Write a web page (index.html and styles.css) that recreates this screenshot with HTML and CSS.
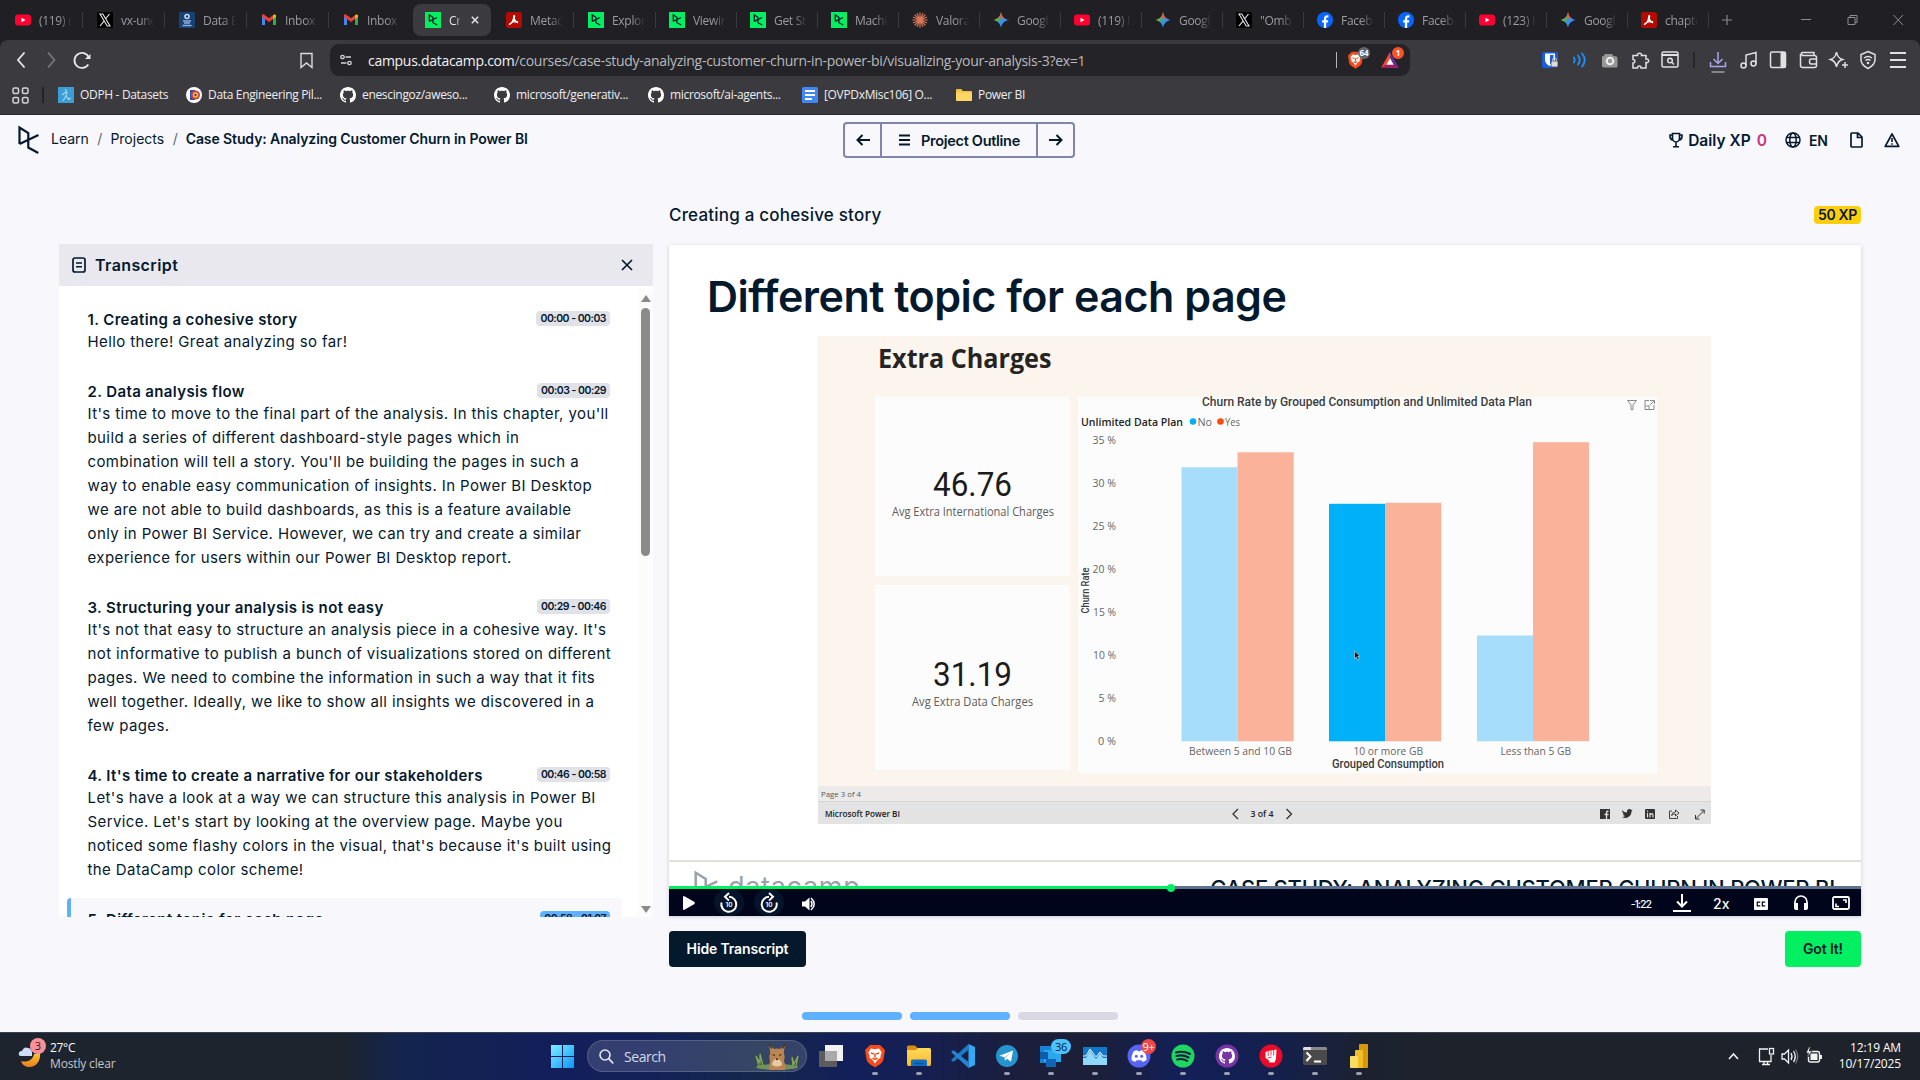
FILE: index.html
```html
<!DOCTYPE html>
<html lang="en">
<head>
<meta charset="utf-8">
<title>Case Study: Analyzing Customer Churn in Power BI</title>
<link rel="stylesheet" href="styles.css">
</head>
<body>
<svg class="defs" aria-hidden="true">
  <defs>
    <linearGradient id="gWin" x1="0" y1="0" x2="1" y2="1"><stop offset="0" stop-color="#7ff0ff"/><stop offset="1" stop-color="#0b96fb"/></linearGradient>
    <linearGradient id="gFold" x1="0" y1="0" x2="0" y2="1"><stop offset="0" stop-color="#ffd95c"/><stop offset="1" stop-color="#fbb92c"/></linearGradient>
    <linearGradient id="gGem" x1="0" y1="0" x2="1" y2="1"><stop offset=".2" stop-color="#f5b912"/><stop offset=".42" stop-color="#3fae6a"/><stop offset=".6" stop-color="#3a8bfd"/></linearGradient>
    <linearGradient id="gMoon" x1="0" y1="0" x2="0" y2="1"><stop offset="0" stop-color="#f9c63a"/><stop offset="1" stop-color="#ec7d16"/></linearGradient>
    <symbol id="yt" viewBox="0 0 16 16"><rect y="2.500" width="16" height="11" rx="3" fill="#ff0033"/><path d="M6.500 5.700v4.600L10.500 8z" fill="#fff"/></symbol>
    <symbol id="x" viewBox="0 0 16 16"><rect width="16" height="16" fill="#000"/><path d="M3 2h2.800l7.200 12h-2.800zM12.500 2L8.700 6.700M3 14l4.200-5.200" fill="none" stroke="#e8e8e8" stroke-width="1.100"/></symbol>
    <symbol id="de" viewBox="0 0 16 16"><rect width="16" height="16" fill="#174275"/><circle cx="8" cy="4.500" r="2.800" fill="#c7d7ec"/><path d="M4 9h8M5 11h6M3.500 13.500h9" stroke="#8fb0d8" stroke-width="1.300"/><circle cx="8" cy="4.500" r="1.200" fill="#174275"/></symbol>
    <symbol id="gm" viewBox="0 0 16 16"><path d="M1 13V3.500l3 2.300V13z" fill="#4285f4"/><path d="M15 13V3.500l-3 2.300V13z" fill="#34a853"/><path d="M1 3.500C1 2.200 2.500 2 3.300 2.700L8 6.300V10L1 4.800z" fill="#ea4335"/><path d="M8 6.300l4-3.100V6.900L8 10z" fill="#ea4335"/><path d="M12 3.200c1.300-1.300 3-.8 3 .6v1l-3 2.200z" fill="#fbbc04"/></symbol>
    <symbol id="dc" viewBox="0 0 16 16"><rect width="16" height="16" fill="#03ef62"/><path d="M4.300 9.300V3l3.600 2.300v5.400l4.300 2.300M4.300 9.300L12 5.500" fill="none" stroke="#05192d" stroke-width="1.300"/></symbol>
    <symbol id="pdf" viewBox="0 0 16 16"><rect width="16" height="16" rx="2.500" fill="#b30b00"/><path d="M3.500 12.200c2-1 4-3.800 4.300-8 .1-1 .9-.5.8.4-.2 2.600-1 4.400-3 6.300-1.200 1.200-2.600 1.800-2.100 1.300zM4.500 11c2.500-1.300 5-1.700 7.600-1.300M8 6.500c1 2.200 2.300 3.600 4 4.500" fill="none" stroke="#fff" stroke-width="1.300"/></symbol>
    <symbol id="cl" viewBox="0 0 16 16"><g stroke="#d97757" stroke-width="1.150" stroke-linecap="round"><path d="M8 .7v14.600M.7 8h14.600M3 3l10 10M13 3L3 13M5.200 1.500l5.600 13M10.800 1.500l-5.600 13M1.500 5.200l13 5.600M14.500 5.200l-13 5.600"/></g></symbol>
    <symbol id="ge" viewBox="0 0 16 16"><path d="M8 0c.7 4.600 3.400 7.300 8 8-4.600.7-7.300 3.400-8 8-.7-4.600-3.400-7.300-8-8 4.600-.7 7.300-3.400 8-8z" fill="url(#gGem)"/><path d="M8 0c.5 3.300 2 5.500 4.300 6.800L6.500 6C7.300 4.500 7.800 2 8 0z" fill="#ee4d5a"/></symbol>
    <symbol id="fb" viewBox="0 0 16 16"><circle cx="8" cy="8" r="8" fill="#0866ff"/><path d="M6.900 16v-5.400H5.100V8.200h1.800V7c0-2.700 1.200-3.800 3.500-3.800l1 .1v2.200h-.8c-1.100 0-1.400.5-1.400 1.400v1.300h2.100l-.4 2.400H9.200V16z" fill="#fff"/></symbol>
    <symbol id="gh" viewBox="0 0 16 16"><path fill-rule="evenodd" d="M8 0C3.580 0 0 3.580 0 8c0 3.540 2.290 6.530 5.470 7.590.4.070.55-.17.55-.38 0-.19-.01-.82-.01-1.490-2.010.37-2.530-.49-2.690-.94-.09-.23-.48-.94-.82-1.130-.28-.15-.68-.52-.01-.53.63-.01 1.080.58 1.230.82.72 1.210 1.870.87 2.330.66.070-.52.280-.87.510-1.070-1.780-.2-3.640-.89-3.640-3.950 0-.87.310-1.590.82-2.150-.08-.2-.36-1.020.08-2.120 0 0 .67-.21 2.200.82.640-.18 1.320-.27 2-.27s1.360.09 2 .27c1.530-1.040 2.200-.82 2.200-.82.440 1.100.160 1.920.080 2.120.510.560.820 1.270.820 2.150 0 3.070-1.870 3.750-3.650 3.950.290.250.540.730.540 1.480 0 1.070-.01 1.930-.01 2.200 0 .21.150.460.550.380A8.010 8.010 0 0016 8c0-4.420-3.580-8-8-8z"/></symbol>
    <symbol id="brave" viewBox="0 0 20 24"><path d="M5 1h10l2.500 2.500L20 6l-1.500 9c-.6 3-2 4.500-8.500 8.500-6.500-4-7.900-5.500-8.500-8.500L0 6l2.500-2.500z" fill="#fb4a1a"/><path d="M6 4.500l4 .8 4-.8 2.700 3.700-1.200 3.800 0 1.700-2.800 2.100L10 19.500l-2.700-3.700-2.800-2.100V12L3.300 8.200z" fill="#fff"/><path d="M6 9l2.800 1M14 9l-2.800 1M10 9.500v4M7.500 14l2.500 1.500 2.500-1.500" stroke="#fb4a1a" stroke-width="1.500" fill="none"/></symbol>
  </defs>
</svg>

<header class="browser">
  <div class="tabstrip">
    <div class="tabs">
      <div class="tab"><svg><use href="#yt"/></svg><span>(119) r</span></div>
      <div class="tab"><svg><use href="#x"/></svg><span>vx-und</span></div>
      <div class="tab"><svg><use href="#de"/></svg><span>Data E</span></div>
      <div class="tab"><svg><use href="#gm"/></svg><span>Inbox (</span></div>
      <div class="tab nosep"><svg><use href="#gm"/></svg><span>Inbox (</span></div>
      <div class="tab active"><svg><use href="#dc"/></svg><span>Cre</span><svg class="tabclose" viewBox="0 0 8 8"><path d="M.8.8l6.400 6.400M7.200.8L.8 7.200" stroke="#e3e3e6" stroke-width="1.500"/></svg></div>
      <div class="tab"><svg><use href="#pdf"/></svg><span>Metad</span></div>
      <div class="tab t81"><svg><use href="#dc"/></svg><span>Explor</span></div>
      <div class="tab t81"><svg><use href="#dc"/></svg><span>Viewin</span></div>
      <div class="tab t81"><svg><use href="#dc"/></svg><span>Get St</span></div>
      <div class="tab t81"><svg><use href="#dc"/></svg><span>Machin</span></div>
      <div class="tab t81"><svg><use href="#cl"/></svg><span>Valora</span></div>
      <div class="tab t81"><svg><use href="#ge"/></svg><span>Googl</span></div>
      <div class="tab t81"><svg><use href="#yt"/></svg><span>(119) F</span></div>
      <div class="tab t81"><svg><use href="#ge"/></svg><span>Googl</span></div>
      <div class="tab t81"><svg><use href="#x"/></svg><span>"Omb</span></div>
      <div class="tab t81"><svg><use href="#fb"/></svg><span>Facebo</span></div>
      <div class="tab t81"><svg><use href="#fb"/></svg><span>Facebo</span></div>
      <div class="tab t81"><svg><use href="#yt"/></svg><span>(123) F</span></div>
      <div class="tab t81"><svg><use href="#ge"/></svg><span>Googl</span></div>
      <div class="tab t81"><svg><use href="#pdf"/></svg><span>chapte</span></div>
    </div>
    <svg class="newtab" viewBox="0 0 10 10"><path d="M5 0v10M0 5h10" stroke="#88888c" stroke-width="1.200"/></svg>
    <svg class="winctl" viewBox="0 0 104 12"><g fill="none" stroke="#8d8d91"><path d="M0 5.500h10"/><path d="M47 3.500h7v7h-7zM49 3.500v-2h7v7h-2"/><path d="M92.500 1l9.500 10M102 1l-9.500 10"/></g></svg>
  </div>
  <div class="chrome">
    <div class="toolbar">
      <svg class="nav" viewBox="0 0 80 24"><g fill="none" stroke-width="1.800"><path d="M8.500 4.500L2 12l6.500 7.500" stroke="#e8e8ea"/><path d="M32 4.500l6.500 7.500-6.500 7.500" stroke="#77777b"/><path d="M72.300 16.500a7.500 7.500 0 1 1 .6-7" stroke="#e8e8ea"/></g><path d="M69 11h5.500V6z" fill="#e8e8ea"/></svg>
      <svg class="bm" viewBox="0 0 13 17"><path d="M1 1.500h11v14L6.500 11 1 15.500z" fill="none" stroke="#dcdce0" stroke-width="1.400"/></svg>
      <div class="urlbar">
        <svg class="tune" viewBox="0 0 12 12"><g fill="none" stroke="#d5d5d8" stroke-width="1.300"><circle cx="2.500" cy="3" r="1.700"/><path d="M5.500 3H11M1 9h5.500"/><circle cx="9.500" cy="9" r="1.700"/></g></svg>
        <span class="url"><b>campus.datacamp.com</b>/courses/case-study-analyzing-customer-churn-in-power-bi/visualizing-your-analysis-3?ex=1</span>
        <i class="caret"></i>
        <span class="shield"><svg viewBox="0 0 20 24"><use href="#brave"/></svg><em>64</em></span>
        <span class="bat"><svg viewBox="0 0 18 16"><path d="M9 0L0 16l5-2.500L9 6z" fill="#ff4724"/><path d="M9 0l9 16-5-2.500L9 6z" fill="#662d91"/><path d="M0 16h18l-5-3.500H5z" fill="#9e1f63"/><path d="M9 6l3.700 6.700H5.300z" fill="#fff"/></svg><em>1</em></span>
      </div>
      <svg class="ext" viewBox="0 0 366 24">
        <rect width="16" height="16" x="0" y="4" rx="2" fill="#175ddc"/><path d="M3 5.500h10V12c0 3-2.500 5-5 6.300C5.500 17 3 15 3 12z" fill="#fff"/><path d="M8 7h3.500v5c0 2-1.500 3-3.500 4z" fill="#175ddc"/><rect x="9" y="13" width="7" height="6" rx="1" fill="#ddd" stroke="#333" stroke-width=".7"/><path d="M10.700 13v-1.500a1.800 1.800 0 013.600 0V13" fill="none" stroke="#ccc"/>
        <g fill="none" stroke="#1e90ff" stroke-width="1.800" stroke-linecap="round"><path d="M32 9.500q1.500 2.500 0 5M36 7.500q3.500 4.500 0 9M40 5.500q5.500 6.500 0 13"/></g>
        <path d="M60 9q0-1 1.500-1L63 6h7l1.500 2q4 0 4 2v8q0 1.500-1.500 1.500H62q-2 0-2-1.500z" fill="#979797"/><circle cx="68" cy="13" r="3.300" fill="none" stroke="#eee" stroke-width="2"/>
        <g fill="none" stroke="#e1e1e4" stroke-width="1.500"><path d="M91 7.500h4.500c-1-3 5-3 4 0H104v3.500c3.500-.8 3.500 4.500 0 3.500V20h-5c.5-2.800-3.500-2.800-3.500 0H91v-5c2.500.3 2.500-3.500 0-3.500z"/><rect x="120" y="4" width="16" height="15" rx="1.500"/><path d="M120 7h16" stroke-width="2"/><circle cx="128" cy="12.500" r="2.300"/><path d="M130 14.500l2 2"/></g>
        <path d="M152 4v16" stroke="#222226" stroke-width="1.500"/>
        <g fill="none" stroke="#a9a5ee" stroke-width="1.500"><path d="M176 4v11M171.500 11l4.500 4.500 4.500-4.500M168.500 14v4.500h15V14"/></g><path d="M169.500 24h13" stroke="#858589" stroke-width="2"/>
        <g fill="none" stroke="#e1e1e4" stroke-width="1.500"><circle cx="201.500" cy="17.500" r="2.500"/><circle cx="211.500" cy="15.500" r="2.500"/><path d="M204 17.500V7l10-2.500v11"/><rect x="228.500" y="4" width="15" height="15.500" rx="1.500"/><path d="M273 7.500h-12.500q-2.500-2.500 0-3h11.500v3q2.500 0 2.500 2v8q0 2-2 2H261q-2.500 0-2.500-2V6M274 11h-5q-1.500 0-1.500 2.500t1.500 2.500h5"/><path d="M294.500 4q1 6 6 7.500-5 1.500-6 7.500-1-6-6-7.500 5-1.500 6-7.500z"/><path d="M303 14v6M300 17h6"/><path d="M326 3.500l7 3v5q0 5.500-7 9-7-3.500-7-9v-5z"/><path d="M322 10q4-3 8 0M323.500 12.500q2.500-2 5 0"/><path d="M348 5h16M348 12h16M348 19h16" stroke-width="1.800"/></g><rect x="238.500" y="4" width="5" height="15.500" fill="#e1e1e4"/><circle cx="326" cy="15" r="1.300" fill="#e1e1e4"/>
      </svg>
    </div>
    <div class="bookmarks">
      <svg class="apps" viewBox="0 0 17 17"><g fill="none" stroke="#d5d5d8" stroke-width="1.500"><rect x="1" y="1" width="5.500" height="5.500" rx="1.500"/><rect x="10.500" y="1" width="5.500" height="5.500" rx="1.500"/><rect x="1" y="10.500" width="5.500" height="5.500" rx="1.500"/><rect x="10.500" y="10.500" width="5.500" height="5.500" rx="1.500"/></g></svg>
      <i class="bsep"></i>
      <a class="b1"><svg viewBox="0 0 16 16"><rect width="16" height="16" fill="#3c9cd6"/><path d="M7 2l2 3-1 4 3 4M8 5L4 8M8 9l-3 5M10 11l3 1" stroke="#9fd6f3" fill="none" stroke-width="1.200"/></svg><span>ODPH - Datasets</span></a>
      <a class="b2"><svg viewBox="0 0 16 16"><circle cx="8" cy="8" r="8" fill="#fff"/><path d="M4 3h5v10H4z" fill="#2b50b8"/><circle cx="9.500" cy="8" r="4.500" fill="#d93a3a"/><circle cx="9.500" cy="8" r="2.700" fill="#f4c430"/><circle cx="9.500" cy="8" r="1.200" fill="#2b50b8"/></svg><span>Data Engineering Pil...</span></a>
      <a class="b3"><svg fill="#fff"><use href="#gh"/></svg><span>enescingoz/aweso...</span></a>
      <a class="b4"><svg fill="#fff"><use href="#gh"/></svg><span>microsoft/generativ...</span></a>
      <a class="b5"><svg fill="#fff"><use href="#gh"/></svg><span>microsoft/ai-agents...</span></a>
      <a class="b6"><svg viewBox="0 0 16 16"><rect width="16" height="16" rx="1.500" fill="#4285f4"/><path d="M3 4h10M3 8h10M3 12h7" stroke="#fff" stroke-width="1.800"/></svg><span>[OVPDxMisc106] O...</span></a>
      <a class="b7"><svg viewBox="0 0 16 16"><path d="M0 3q0-1 1-1h4l2 2h8q1 0 1 1v8q0 1-1 1H1q-1 0-1-1z" fill="#f2c14a"/><path d="M0 5.500h16V13q0 1-1 1H1q-1 0-1-1z" fill="#ffd666"/></svg><span>Power BI</span></a>
    </div>
  </div>
</header>

<main class="page">
  <div class="topbar">
    <nav class="crumbs">
      <svg class="logo" viewBox="0 0 22 28"><path d="M1.500 18V1.500L10.300 7v14.500l10 5.500M1.500 18L20.500 9" fill="none" stroke="#05192d" stroke-width="2.200"/></svg>
      <span class="c1">Learn</span><i>/</i><span class="c2">Projects</span><i>/</i><strong>Case Study: Analyzing Customer Churn in Power BI</strong>
    </nav>
    <div class="outline">
      <button class="arrow"><svg viewBox="0 0 14 12"><path d="M14 6H1.500M6.500 1l-5 5 5 5" fill="none" stroke="#05192d" stroke-width="2"/></svg></button>
      <button class="mid"><svg viewBox="0 0 11 12"><path d="M0 1.500h11M0 6h11M0 10.500h11" stroke="#05192d" stroke-width="1.800"/></svg><span>Project Outline</span></button>
      <button class="arrow"><svg viewBox="0 0 14 12"><path d="M0 6h12.500M7.500 1l5 5-5 5" fill="none" stroke="#05192d" stroke-width="2"/></svg></button>
    </div>
    <div class="userbar">
      <svg class="trophy" viewBox="0 0 14 16"><g fill="none" stroke="#05192d" stroke-width="1.600"><path d="M3.500 1.500h7v4.500a3.500 4 0 01-7 0zM3.500 3H1v2q.5 3 3.500 3M10.500 3H13v2q-.5 3-3.500 3M7 10v4.500M4 14.700h6"/></g></svg>
      <span class="xp">Daily XP</span><span class="zero">0</span>
      <svg class="globe" viewBox="0 0 16 16"><g fill="none" stroke="#05192d" stroke-width="1.500"><circle cx="8" cy="8" r="7"/><ellipse cx="8" cy="8" rx="3.200" ry="7"/><path d="M1.500 5.500h13M1.500 10.500h13"/></g></svg>
      <span class="lang">EN</span>
      <svg class="doc" viewBox="0 0 13 16"><path d="M1 2q0-1 1-1h6l4 4v9q0 1-1 1H2q-1 0-1-1zM7.500 1v4.500H12" fill="none" stroke="#05192d" stroke-width="1.700"/></svg>
      <svg class="warn" viewBox="0 0 16 16"><path d="M8 2L1.200 14.300h13.600z" fill="none" stroke="#05192d" stroke-width="1.700" stroke-linejoin="round"/><path d="M8 6v4M8 11.200v1.600" stroke="#05192d" stroke-width="1.600"/></svg>
    </div>
  </div>

  <div class="workspace">
    <section class="transcript">
      <div class="thead">
        <svg class="tico" viewBox="0 0 14 16"><rect x="1" y="1" width="12" height="14" rx="2" fill="none" stroke="#05192d" stroke-width="1.700"/><path d="M4 6h6M4 9.700h6" stroke="#05192d" stroke-width="1.500"/></svg>
        <h2>Transcript</h2>
        <svg class="tx" viewBox="0 0 10 10"><path d="M0 0l10 10M10 0L0 10" stroke="#05192d" stroke-width="1.700"/></svg>
      </div>
      <div class="tbody">
        <div class="items">
          <article><div class="row"><h3>1. Creating a cohesive story</h3><time>00:00 - 00:03</time></div><p>Hello there! Great analyzing so far!</p></article>
          <article><div class="row"><h3>2. Data analysis flow</h3><time>00:03 - 00:29</time></div><p>It's time to move to the final part of the analysis. In this chapter, you'll<br>build a series of different dashboard-style pages which in<br>combination will tell a story. You'll be building the pages in such a<br>way to enable easy communication of insights. In Power BI Desktop<br>we are not able to build dashboards, as this is a feature available<br>only in Power BI Service. However, we can try and create a similar<br>experience for users within our Power BI Desktop report.</p></article>
          <article><div class="row"><h3>3. Structuring your analysis is not easy</h3><time>00:29 - 00:46</time></div><p>It's not that easy to structure an analysis piece in a cohesive way. It's<br>not informative to publish a bunch of visualizations stored on different<br>pages. We need to combine the information in such a way that it fits<br>well together. Ideally, we like to show all insights we discovered in a<br>few pages.</p></article>
          <article><div class="row"><h3>4. It's time to create a narrative for our stakeholders</h3><time>00:46 - 00:58</time></div><p>Let's have a look at a way we can structure this analysis in Power BI<br>Service. Let's start by looking at the overview page. Maybe you<br>noticed some flashy colors in the visual, that's because it's built using<br>the DataCamp color scheme!</p></article>
          <article class="current"><div class="row"><h3>5. Different topic for each page</h3><time>00:58 - 01:07</time></div></article>
        </div>
        <div class="scroll"><i class="up"></i><i class="thumb"></i><i class="down"></i></div>
      </div>
    </section>

    <section class="lesson">
      <div class="lhead"><h2>Creating a cohesive story</h2><span class="pill">50 XP</span></div>
      <div class="video">
        <div class="slide">
          <h1>Different topic for each page</h1>
          <svg class="report" viewBox="818 336 893 488">
            <rect x="818" y="336" width="893" height="450" fill="#fbf5ee"/>
            <text x="878" y="368" class="pb big" textLength="173.500" lengthAdjust="spacingAndGlyphs">Extra Charges</text>
            <g fill="#fcfcfc"><rect x="875" y="397" width="195" height="179"/><rect x="875" y="585" width="195" height="185"/><rect x="1078" y="397" width="579" height="376"/></g>
            <text x="933" y="495.500" class="num" textLength="79" lengthAdjust="spacingAndGlyphs">46.76</text>
            <text x="892" y="516" class="lab" textLength="162" lengthAdjust="spacingAndGlyphs">Avg Extra International Charges</text>
            <text x="933" y="685.500" class="num" textLength="79" lengthAdjust="spacingAndGlyphs">31.19</text>
            <text x="912" y="706" class="lab" textLength="121" lengthAdjust="spacingAndGlyphs">Avg Extra Data Charges</text>
            <text x="1202" y="406" class="ct" textLength="330" lengthAdjust="spacingAndGlyphs">Churn Rate by Grouped Consumption and Unlimited Data Plan</text>
            <g fill="none" stroke="#8a8a8a"><path d="M1627.500 400.500h9l-3.500 4.500v4.500h-2V405z"/><path d="M1649 400.500h-4v9h9V405M1650 400.500h4.500v3.500M1654 401l-4.500 4.500M1645.500 406h3.500v3"/></g>
            <text x="1081" y="425.500" class="pb sm" textLength="102" lengthAdjust="spacingAndGlyphs">Unlimited Data Plan</text>
            <circle cx="1193" cy="421.500" r="3.300" fill="#00aff9"/><text x="1197.500" y="425.500" class="ax" textLength="14.500" lengthAdjust="spacingAndGlyphs">No</text>
            <circle cx="1220.500" cy="421.500" r="3.300" fill="#fb4c09"/><text x="1225" y="425.500" class="ax" textLength="15" lengthAdjust="spacingAndGlyphs">Yes</text>
            <g class="ax">
              <text x="1092.500" y="443.500" textLength="23.500" lengthAdjust="spacingAndGlyphs">35 %</text>
              <text x="1092.500" y="486.500" textLength="23.500" lengthAdjust="spacingAndGlyphs">30 %</text>
              <text x="1092.500" y="530" textLength="23.500" lengthAdjust="spacingAndGlyphs">25 %</text>
              <text x="1092.500" y="573" textLength="23.500" lengthAdjust="spacingAndGlyphs">20 %</text>
              <text x="1093" y="616" textLength="23" lengthAdjust="spacingAndGlyphs">15 %</text>
              <text x="1093" y="659" textLength="23" lengthAdjust="spacingAndGlyphs">10 %</text>
              <text x="1098.500" y="702" textLength="17.500" lengthAdjust="spacingAndGlyphs">5 %</text>
              <text x="1098" y="745" textLength="18" lengthAdjust="spacingAndGlyphs">0 %</text>
              <text x="1189" y="755" textLength="103" lengthAdjust="spacingAndGlyphs">Between 5 and 10 GB</text>
              <text x="1353.500" y="755" textLength="69.500" lengthAdjust="spacingAndGlyphs">10 or more GB</text>
              <text x="1500.500" y="755" textLength="70.500" lengthAdjust="spacingAndGlyphs">Less than 5 GB</text>
            </g>
            <text transform="translate(1089 613.500) rotate(-90)" class="ct tiny" textLength="46" lengthAdjust="spacingAndGlyphs">Churn Rate</text>
            <text x="1332" y="768" class="ct" textLength="112" lengthAdjust="spacingAndGlyphs">Grouped Consumption</text>
            <g fill="#a5ddfb"><rect x="1181.500" y="467.300" width="56" height="274"/><rect x="1477" y="635.500" width="56" height="105.800"/></g>
            <rect x="1329" y="503.800" width="56.300" height="237.500" fill="#00b0f8"/>
            <g fill="#fab29a"><rect x="1237.500" y="452.300" width="56.200" height="289"/><rect x="1385.300" y="502.800" width="56" height="238.500"/><rect x="1533" y="442.200" width="56" height="299"/></g>
            <path d="M1354.500 651v7.500l1.700-1.500 1.500 3 1.500-.7-1.500-3h2.300z" fill="#111" stroke="#ddd" stroke-width=".6"/>
            <rect x="818" y="786" width="893" height="15.500" fill="#ecebe9"/><rect x="818" y="801" width="893" height="23" fill="#e3e3e3"/><path d="M818 801.500h893" stroke="#d6d5d3"/>
            <text x="821" y="797" class="pg" textLength="40" lengthAdjust="spacingAndGlyphs">Page 3 of 4</text>
            <text x="825" y="817" class="pw" textLength="75" lengthAdjust="spacingAndGlyphs">Microsoft Power BI</text>
            <text x="1250.500" y="817" class="pw" textLength="23" lengthAdjust="spacingAndGlyphs">3 of 4</text>
            <path d="M1238 809l-5 5 5 5M1286.500 809l5 5-5 5" fill="none" stroke="#333" stroke-width="1.300"/>
            <rect x="1600" y="809" width="10" height="10" fill="#333"/><path d="M1606.500 819v-6q0-2 2-2M1604.500 814.500h4" stroke="#e3e3e3" stroke-width="1.300" fill="none"/>
            <path d="M1622 810q2 2.500 5 2.500c-.5-4 3.300-4 4-2.500l1.500-.5-1 2c0 5-5 8-9.500 5.500q2 0 3-1-2-.5-2-2h1q-1.800-1-2-4z" fill="#333"/>
            <rect x="1645" y="809" width="10" height="10" rx="1" fill="#333"/><path d="M1647.500 813v4.500M1650 817.500V813M1650.500 814.500q2.500-2 2.500 1v2" stroke="#e3e3e3" fill="none" stroke-width="1.200"/><circle cx="1647.500" cy="811.200" r=".7" fill="#e3e3e3"/>
            <path d="M1672 811h-2.500v7.500h8V816M1671.500 815.500q.5-3.500 4-3.500v-2l3.500 3-3.500 3v-2q-2.500 0-4 1.500z" fill="none" stroke="#444"/>
            <path d="M1696 818.500l8-8M1700.500 810h3.700v3.700M1695.500 815v4h4" fill="none" stroke="#333"/>
          </svg>
          <div class="brandline">
            <svg class="dlogo" viewBox="0 0 22 28"><path d="M1.500 18V1.500L10.300 7v14.500l10 5.500M1.500 18L20.500 9" fill="none" stroke="#99a1aa" stroke-width="2.200"/></svg>
            <span class="dname">datacamp</span>
            <span class="dcase">CASE STUDY: ANALYZING CUSTOMER CHURN IN POWER BI</span>
          </div>
        </div>
        <div class="track"><i class="played"></i><i class="knob"></i></div>
        <div class="controls">
          <svg class="play" viewBox="0 0 12 14"><path d="M1 0q-1 0-1 1v12q0 1 1 1l10.500-6q.8-1 0-2z" fill="#fff"/></svg>
          <span class="disc d1"><svg viewBox="0 0 18 20"><path d="M1.500 9.500a7.500 7.500 0 1 0 7.500-5.700" fill="none" stroke="#fff" stroke-width="2"/><path d="M9 0L5 3.800 9 7.600" fill="none" stroke="#fff" stroke-width="2"/><text x="9" y="14" text-anchor="middle">10</text></svg></span>
          <span class="disc d2"><svg viewBox="0 0 18 20"><path d="M16.500 9.500A7.500 7.500 0 1 1 9 3.800" fill="none" stroke="#fff" stroke-width="2"/><path d="M9 0l4 3.800L9 7.600" fill="none" stroke="#fff" stroke-width="2"/><text x="9" y="14" text-anchor="middle">10</text></svg></span>
          <svg class="vol" viewBox="0 0 14 14"><path d="M0 4.500h3L7.500.5v13L3 9.500H0z" fill="#fff"/><path d="M9 4q2 3 0 6M9 1q6.500 6 0 12" fill="none" stroke="#fff" stroke-width="1.500"/></svg>
          <span class="left">-1:22</span>
          <svg class="dl" viewBox="0 0 18 18"><path d="M9 0v12M4 7.500l5 5 5-5M0 17h18" fill="none" stroke="#fff" stroke-width="2"/></svg>
          <span class="speed">2x</span>
          <svg class="cc" viewBox="0 0 14 12"><rect width="14" height="12" rx="1" fill="#fff"/><path d="M6.200 4.200H3.300v3.600h2.900M11.200 4.200H8.300v3.600h2.900" fill="none" stroke="#00051b" stroke-width="1.200"/></svg>
          <svg class="hp" viewBox="0 0 14 15"><path d="M1 9V7a6 6 0 0112 0v2" fill="none" stroke="#fff" stroke-width="1.700"/><path d="M0 8h4v7H2q-2 0-2-2zM14 8h-4v7h2q2 0 2-2z" fill="#fff"/></svg>
          <svg class="fs" viewBox="0 0 18 14"><rect x="1" y="1" width="16" height="12" rx="1.500" fill="none" stroke="#fff" stroke-width="1.800"/><path d="M11 4h3v3M7 10.500H4v-3" fill="none" stroke="#fff" stroke-width="1.600"/></svg>
        </div>
      </div>
      <div class="actions"><button class="hide"><span>Hide Transcript</span></button><button class="got"><span>Got It!</span></button></div>
    </section>
  </div>
  <div class="steps"><i class="on"></i><i class="on"></i><i></i></div>
</main>

<footer class="taskbar">
  <div class="weather">
    <svg viewBox="0 0 28 28"><path d="M22 11c1 8-4 14-10.500 14Q5 25 3 19c6 2 12-1 13-7z" fill="url(#gMoon)"/><path d="M3 14Q0 14 1 10.500 2 8.500 4 9 6 4 10 6q3 0 4 4v4z" fill="#cfdcf7"/></svg>
    <em>3</em>
    <div class="wtext"><span class="w1">27°C</span><span class="w2">Mostly clear</span></div>
  </div>
  <svg class="win" viewBox="0 0 23 23"><path d="M0 0h11v11H0zM12 0h11v11H12zM0 12h11v11H0zM12 12h11v11H12z" fill="url(#gWin)"/></svg>
  <div class="search">
    <svg class="mag" viewBox="0 0 15 15"><circle cx="6" cy="6" r="5" fill="none" stroke="#e4e6f2" stroke-width="1.600"/><path d="M9.700 9.700L14.300 14.500" stroke="#e4e6f2" stroke-width="1.800"/></svg>
    <span>Search</span>
    <svg class="lynx" viewBox="0 0 44 28"><ellipse cx="22" cy="25" rx="21" ry="3" fill="#71925a"/><path d="M4 24L1 14l4 7 0-9 3 12M38 24l-1-9 2 7 4-8-2 10" stroke="#83a850" stroke-width="1.300" fill="none"/><path d="M14.500 28q-1-5 .5-9-1.500-4 .2-8L14 2l5 5q3-1 6 0l5-5-1.200 9q1.700 4 .2 8 2 4 1 9z" fill="#b98552"/><path d="M14 1.500l2.500 5M30 1.500l-2.500 5" stroke="#4a2d1c" stroke-width="1.500"/><path d="M17 23q0-5 5-6.500 5 1.500 5 6.500-5 3-10 0z" fill="#e4c9a6"/><path d="M17.500 12.500l2.500 1M26.500 12.500l-2.500 1M21 17h2l-1 1z" stroke="#38251a" fill="#38251a"/></svg>
  </div>
  <div class="appsrow">
    <span><svg viewBox="0 0 24 24"><rect x="6" y="1" width="18" height="16" fill="#f2f2f2"/><rect y="7" width="18" height="16" fill="#5c5c5e"/><rect x="6" y="7" width="12" height="10" fill="#aaa"/></svg></span>
    <span class="run"><svg viewBox="0 0 24 24"><use href="#brave" x="2" width="20" height="24"/></svg></span>
    <span class="run"><svg viewBox="0 0 24 24"><path d="M0 3q0-1.500 1.500-1.500H8L10.500 4H22v5H0z" fill="#dc8d0e"/><path d="M0 6h9l2-2h11.500q1.500 0 1.500 1.500V20q0 2-1.500 2h-21Q0 22 0 20z" fill="url(#gFold)"/><path d="M4 22v-5q0-1.500 1.500-1.500h13Q20 15.500 20 17v5z" fill="#1270c4"/><path d="M7.500 19.500h9" stroke="#0b4f93" stroke-width="1.500"/></svg></span>
    <span><svg viewBox="0 0 24 24"><path d="M17.500 0v6L3 17.500q-1.500.5-2.500-1v-1z" fill="#1b7bc1"/><path d="M17.500 24v-6L3 6.500Q1.500 6 .5 7.500v1z" fill="#2186cf"/><path d="M17.500 0L24 3v18l-6.500 3z" fill="#32a9f2"/></svg></span>
    <span class="run"><svg viewBox="0 0 24 24"><circle cx="12" cy="12" r="11" fill="#2595d0"/><path d="M4.500 11.700L18 6.500l-2 11.300-4-3-2 2-.5-3.500z" fill="#fff"/><path d="M9.500 13.300l6-4.500-5.500 6z" fill="#9cc9e4"/></svg></span>
    <span class="run"><svg viewBox="0 0 24 24"><path d="M1 2h16v17H1z" fill="#1683d6"/><path d="M5 6h17v12H5z" fill="#2ba7ef"/><path d="M7 15h10v8H7z" fill="#0f65b8"/><path d="M1 8h8v7H1z" fill="#0d5cab"/></svg><em class="blue">36</em></span>
    <span class="run"><svg viewBox="0 0 24 24"><rect y="3" width="24" height="18" fill="#1279c9"/><path d="M0 14h3l4-8 6 9 4-6 3 5h4v7H0z" fill="#8fd8fb"/><path d="M0 12h3l4-7 6 8 4-5 3 4h4" stroke="#e4f7ff" fill="none"/></svg></span>
    <span class="run"><svg viewBox="0 0 24 24"><circle cx="12" cy="12" r="11.500" fill="#5865f2"/><path d="M6.500 7.500q2-1.200 3.800-1.300l.5 1h2.400l.5-1q1.800.1 3.800 1.300 2.300 4 2 8.500-1.800 1.500-4 1.800l-1-1.600h-5l-1 1.600q-2.200-.3-4-1.800-.3-4.500 2-8.500z" fill="#fff"/><circle cx="9.300" cy="12.300" r="1.500" fill="#5865f2"/><circle cx="14.700" cy="12.300" r="1.500" fill="#5865f2"/></svg><em class="red">9+</em></span>
    <span class="run"><svg viewBox="0 0 24 24"><circle cx="12" cy="12" r="11.500" fill="#1ed760"/><path d="M5 8.500q7.500-2 14 1.500M5.500 12q6.500-1.700 12 1.500M6.200 15.500q5.500-1.300 10 1.300" fill="none" stroke="#14203c" stroke-width="2.100" stroke-linecap="round"/></svg></span>
    <span class="run"><svg viewBox="0 0 24 24"><circle cx="12" cy="12" r="11.500" fill="#7a35a5"/><g fill="#fff"><use href="#gh" x="4" y="4" width="16" height="16"/></g></svg></span>
    <span class="run"><svg viewBox="0 0 24 24"><circle cx="12" cy="12" r="11.500" fill="#ea0a2a"/><path d="M6.500 8l2.500-1 8.500-1.500-.5 9.500-1.500 3.500h-5L9.500 16l-3-2z" fill="#fff"/><path d="M9.200 7v5M12 6.500v5M14.700 6v5.500M8.500 14l4-1" stroke="#ea0a2a" stroke-width=".8"/></svg></span>
    <span class="run"><svg viewBox="0 0 24 24"><rect y="3" width="24" height="18" rx="1.500" fill="#4a4a4a"/><path d="M0 4.500Q0 3 1.500 3H8v3H0z" fill="#ddd"/><path d="M8 3h14.500Q24 3 24 4.500V6H8z" fill="#8a8a8a"/><path d="M3.500 8.500l4 4-4 4.500M11 17.500h7" stroke="#fff" stroke-width="2" fill="none"/></svg></span>
    <span class="run"><svg viewBox="0 0 24 24"><rect x="12" width="9" height="24" rx="1" fill="#d9970b"/><rect x="8" y="6" width="8" height="18" rx="1" fill="#f0bd27"/><rect x="3" y="12" width="8" height="12" rx="1" fill="#f9dd62"/></svg></span>
  </div>
  <svg class="tray" viewBox="0 0 100 22"><g fill="none" stroke="#f2f2f2" stroke-width="1.300"><path d="M2 14l4.500-5 4.500 5" stroke-width="1.600"/><path d="M41 4h-8.500v12.500H44V10M35 19.500h8M37 16.500v3M40.500 16.500v3"/><rect x="42.500" y="3.500" width="4" height="5.500"/><path d="M55 9h2.500l4-4v13l-4-4H55zM64 8q2 3.500 0 7M66.500 6q3.500 5.500 0 11"/></g><path d="M68.500 4.500q4.500 7 0 14" fill="none" stroke="#777" stroke-width="1.200"/><rect x="81.500" y="6.500" width="11" height="10.500" rx="2" fill="none" stroke="#f2f2f2" stroke-width="1.400"/><path d="M83.500 8.500h7V15h-7zM93 10h2v4h-2z" fill="#f2f2f2"/><path d="M82 2l-3 6h3l-1 4 4-6h-3l1.500-4z" fill="#fff" stroke="#1d222c" stroke-width=".7"/></svg>
  <div class="clock"><span class="k1">12:19 AM</span><span class="k2">10/17/2025</span></div>
</footer>
</body>
</html>
```

FILE: styles.css
```css
* { box-sizing: border-box; }
html, body { margin: 0; width: 1920px; height: 1080px; overflow: hidden; }
body { display: flex; flex-direction: column; background: #f7f7fc; color: #05192d; font-family: Inter, "Liberation Sans", sans-serif; }
svg { display: block; flex: none; overflow: visible; }
h1, h2, h3, p { margin: 0; }
button { font: inherit; color: inherit; border: 0; background: none; padding: 0; }
em, i { font-style: normal; }
span, strong, time, h2, h3 { white-space: nowrap; }
.defs { width: 0; height: 0; position: absolute; }

/* browser chrome */
.browser { height: 115px; background: #202024; font-family: "Open Sans", "Noto Sans", sans-serif; flex: none; }
.tabstrip { height: 40px; display: flex; align-items: center; padding-left: 3px; }
.tabs { display: flex; }
.tab { width: 82px; height: 32px; display: flex; align-items: center; padding-left: 12px; border-radius: 8px; background: linear-gradient(#3c3c40, #3c3c40) 79px 8px / 1px 16px no-repeat; font-size: 12px; color: #9c9ca0; }
.tab.t81 { width: 81px; }
.tab svg { width: 16px; height: 16px; }
.tab span { width: 33px; margin-left: 8px; overflow: hidden; letter-spacing: -.3px; -webkit-mask-image: linear-gradient(90deg, #000 60%, transparent); mask-image: linear-gradient(90deg, #000 60%, transparent); }
.tab.nosep { background: none; }
.tab.active { width: 78px; margin-right: 3px; background: #3b3b3f; color: #e6e6e8; }
.tab.active span { width: 12px; }
.tab .tabclose { width: 8px; height: 8px; margin-left: 10px; }
.newtab { width: 10px; height: 10px; margin-left: 12px; }
.winctl { width: 104px; height: 12px; margin-left: 69px; }
.chrome { height: 75px; background: #3b3b3f; border-radius: 8px 8px 0 0; border-bottom: 1px solid #2c2c30; }
.toolbar { height: 40px; display: flex; align-items: center; padding-left: 16px; }
.nav { width: 80px; height: 24px; }
.bm { width: 13px; height: 17px; margin-left: 204px; }
.urlbar { margin-left: 17px; width: 1080px; height: 32px; border-radius: 9px; background: #242428; display: flex; align-items: center; padding-left: 10px; }
.tune { width: 12px; height: 12px; }
.url { margin-left: 16px; width: 968px; font-size: 14px; color: #b9b9bd; letter-spacing: -.285px; }
.url b { font-weight: 400; color: #f2f2f4; }
.caret { width: 1px; height: 16px; background: #b5b5b8; }
.shield, .bat { position: relative; }
.shield { margin-left: 11px; }
.shield svg { width: 15px; height: 18px; }
.bat { margin-left: 18px; }
.bat svg { width: 18px; height: 16px; }
.shield em { position: absolute; left: 10px; top: -4px; width: 12px; height: 12px; border-radius: 6px; background: #63666f; color: #fff; font: 700 8px/12px "Open Sans", sans-serif; text-align: center; }
.bat em { position: absolute; left: 11px; top: -5px; width: 12px; height: 12px; border-radius: 6px; background: #fb542b; color: #fff; font: 700 8px/12px "Open Sans", sans-serif; text-align: center; }
.ext { width: 366px; height: 24px; margin-left: 132px; }
.bookmarks { height: 30px; display: flex; align-items: center; padding-left: 12px; font-size: 12px; color: #ededf0; }
.apps { width: 17px; height: 17px; }
.bsep { width: 2px; height: 16px; margin: 0 14px 0 13px; background: #232327; }
.bookmarks a { display: flex; align-items: center; gap: 6px; height: 16px; letter-spacing: -.33px; }
.bookmarks a svg { width: 16px; height: 16px; }
.bookmarks a span { line-height: 14px; margin-top: -1px; }
.b1 { width: 128px; } .b2 { width: 154px; } .b3, .b4, .b5 { width: 154px; } .b6 { width: 154px; }

/* page header */
.page { flex: 1; display: flex; flex-direction: column; }
.topbar { display: grid; grid-template-columns: 1fr auto 1fr; align-items: center; height: 50px; padding: 0 20px 0 18px; font-weight: 500; }
.crumbs { display: flex; align-items: center; font-size: 14px; margin-top: -1px; }
.logo { width: 22px; height: 28px; margin-right: 11px; }
.crumbs span, .crumbs i, .crumbs strong { margin-top: -2px; }
.crumbs span { font-weight: 400; }
.crumbs i { margin: -2px 8px 0 8.500px; font-weight: 400; color: #5d6878; }
.crumbs strong { font-weight: 600; letter-spacing: -.1px; }
.outline { display: flex; width: 232px; height: 36px; border: 2px solid #8086ab; border-radius: 4px; }
.outline button { display: flex; align-items: center; justify-content: center; }
.outline .arrow { width: 35px; }
.arrow svg { width: 14px; height: 12px; }
.outline .mid { flex: 1; gap: 11px; padding-left: 1px; font-size: 14.500px; font-weight: 600; letter-spacing: -.3px; border-left: 2px solid #8086ab; border-right: 2px solid #8086ab; }
.mid svg { width: 11px; height: 12px; }
.userbar { display: flex; align-items: center; justify-content: flex-end; font-size: 15.500px; font-weight: 600; }
.trophy { width: 14px; height: 16px; margin-right: 5px; }
.zero { color: #c7347b; margin: 0 18px 0 6px; }
.globe { width: 16px; height: 16px; margin-right: 8px; }
.lang { font-size: 14px; }
.doc { width: 13px; height: 16px; margin-left: 22px; }
.warn { width: 16px; height: 16px; margin-left: 21px; }

/* workspace */
.workspace { display: flex; gap: 16px; padding: 79px 59px 0; }
.transcript { width: 594px; height: 673px; background: #fff; display: flex; flex-direction: column; }
.thead { height: 42px; background: #e8e8ee; display: flex; align-items: center; padding: 0 21px 0 13px; flex: none; }
.tico { width: 14px; height: 16px; }
.thead h2 { font-size: 16px; font-weight: 600; margin-left: 9px; flex: 1; letter-spacing: .4px; }
.tx { width: 10px; height: 10px; }
.tbody { flex: 1; display: flex; overflow: hidden; }
.items { flex: 1; padding: 12px 16px 0 8px; height: 631px; overflow: hidden; }
.items article { padding: 12px 12px 16px 20.500px; }
.items .row { display: flex; height: 20px; align-items: center; justify-content: space-between; }
.items h3 { font-size: 15px; font-weight: 600; letter-spacing: .37px; margin-top: -2px; }
.items time { font-size: 10.500px; font-weight: 600; line-height: 15px; padding: 0 4px; border-radius: 4px; background: #e1e1e8; margin-top: -3px; letter-spacing: -.5px; }
.items p { font-size: 15px; line-height: 24px; white-space: nowrap; letter-spacing: .4px; }
.items .current { background: #f7f7fc; border-left: 4px solid #5eb1ff; padding-left: 16.500px; border-radius: 4px; }
.items .current time { background: #5eb1ff; }
.scroll { width: 15px; background: #fcfcfc; margin-top: 4px; display: flex; flex-direction: column; align-items: center; padding: 5px 0 4px; }
.up { border: 5px solid transparent; border-top: 0; border-bottom: 7px solid #8b8b8b; }
.thumb { width: 9px; height: 248px; margin-top: 6px; border-radius: 5px; background: #8b8b8b; }
.down { margin-top: auto; border: 5px solid transparent; border-bottom: 0; border-top: 7px solid #8b8b8b; }

.lesson { width: 1192px; margin-top: -42px; }
.lhead { height: 43px; display: flex; justify-content: space-between; padding-top: 4px; }
.lhead h2 { font-size: 17px; font-weight: 500; line-height: 19px; letter-spacing: .2px; }
.pill { height: 18px; padding: 0 4px; border-radius: 4px; background: #fcce0d; font-size: 14px; font-weight: 600; line-height: 18px; letter-spacing: -.35px; }
.video { height: 671px; box-shadow: 0 1px 4px rgba(5, 25, 45, .18); background: #fff; display: flex; flex-direction: column; }
.slide { height: 641px; overflow: hidden; }
.slide h1 { font-size: 43px; font-weight: 600; line-height: 60px; height: 91px; padding: 21px 0 0 38px; letter-spacing: -.5px; }
.report { width: 893px; height: 488px; margin-left: 149px; }
.report text { font-family: "Open Sans", "Noto Sans", sans-serif; }
.report .pb { font-weight: 600; fill: #252423; }
.report .big { font-size: 26px; font-weight: 700; }
.report .sm { font-size: 11px; }
.report .num { font-family: Roboto, sans-serif; font-size: 34px; fill: #1b1b1b; }
.report .lab { font-size: 12px; fill: #5c5c5c; }
.report .ct { font-family: Roboto, sans-serif; font-weight: 500; font-size: 12px; fill: #3c3c3c; }
.report .tiny { font-size: 10px; }
.report .ax, .report .ax text { font-size: 11px; fill: #666; }
.report .pg { font-size: 8px; fill: #555; }
.report .pw { font-size: 9px; font-weight: 600; fill: #222; }
.brandline { display: flex; align-items: flex-start; margin-top: 36px; height: 30px; border-top: 2px solid #e5dfda; padding: 9px 26px 0 25px; overflow: hidden; }
.dlogo { width: 25px; height: 32px; }
.dname { margin-left: 9px; font-size: 27px; line-height: 28px; margin-top: 2px; color: #99a1aa; letter-spacing: .7px; }
.dcase { margin-left: auto; margin-top: 3px; font-size: 22px; font-weight: 500; line-height: 28px; letter-spacing: -.23px; }
.track { height: 3px; background: #5f7390; position: relative; }
.played { display: block; width: 502px; height: 3px; background: #03ef62; }
.knob { position: absolute; left: 498px; top: -2px; width: 8px; height: 8px; border-radius: 4px; background: #03ef62; }
.controls { height: 27px; background: #00051b; display: flex; align-items: center; color: #fff; padding: 0 11px 0 14px; }
.play { width: 12px; height: 14px; }
.disc { width: 30px; height: 27px; display: flex; align-items: center; justify-content: center; border-radius: 14px; background: #05142a; }
.disc svg { width: 18px; height: 20px; }
.disc text { font: 600 6.500px Inter, sans-serif; fill: #fff; }
.d1 { margin-left: 19px; } .d2 { margin-left: 10px; }
.vol { width: 14px; height: 14px; margin: 2px 0 0 18px; }
.left { margin-left: auto; margin-top: 3px; font-size: 10.500px; font-weight: 500; letter-spacing: -1px; }
.dl { width: 18px; height: 18px; margin-left: 22px; }
.speed { width: 17px; margin-left: 22px; font-size: 14px; font-weight: 500; margin-top: 2px; }
.cc { width: 14px; height: 12px; margin: 2px 0 0 24px; }
.hp { width: 14px; height: 15px; margin-left: 26px; }
.fs { width: 18px; height: 14px; margin-left: 24px; }
.actions { display: flex; justify-content: space-between; padding-top: 15px; }
.actions button { height: 36px; border-radius: 4px; font-size: 14px; font-weight: 600; padding-bottom: 1px; letter-spacing: -.15px; }
.hide { width: 137px; background: #05192d; color: #fff; }
.actions .hide { color: #fff; }
.got { width: 76px; background: #03ef62; }
.steps { display: flex; gap: 8px; justify-content: center; margin-top: 45px; }
.steps i { width: 100px; height: 8px; border-radius: 4px; background: #d9d9e6; }
.steps .on { background: #5eb1ff; }

/* taskbar */
.taskbar { height: 48px; flex: none; border-top: 1px solid #3c4150; padding-bottom: 1px; display: flex; align-items: center; font-family: "Open Sans", "Noto Sans", sans-serif; color: #fff; font-size: 12px; background: linear-gradient(90deg, #1e242d 0, #1d242d 340px, #13244d 400px, #131f5a 540px, #13205a 640px, #15284b 760px, #131f5a 850px, #141f55 900px, #1b1f3c 1020px, #1c1f37 1090px, #131f57 1180px, #13204f 1270px, #1c2131 1360px, #1d222b 1440px, #1e222b 1920px); }
.weather { position: relative; display: flex; align-items: center; padding-left: 18px; width: 551px; }
.weather svg { width: 28px; height: 28px; }
.weather em { position: absolute; left: 30px; top: -2px; width: 16px; height: 16px; border-radius: 8px; background: #fb8f9a; color: #2a1a1e; text-align: center; line-height: 16px; font-size: 11px; }
.wtext { display: flex; flex-direction: column; line-height: 16px; margin-left: 4px; letter-spacing: -.3px; }
.w2 { color: #c6c8cc; letter-spacing: -.15px; }
.win { width: 23px; height: 23px; }
.search { margin-left: 13px; width: 220px; height: 32px; border-radius: 16px; background: rgba(255, 255, 255, .14); border: 1px solid rgba(255, 255, 255, .16); display: flex; align-items: center; padding-left: 11px; color: #d5d8e6; font-size: 14px; letter-spacing: -.45px; }
.mag { width: 15px; height: 15px; }
.search span { margin-left: 10px; }
.lynx { width: 44px; height: 28px; margin-left: auto; margin-right: 7px; }
.appsrow { display: flex; margin-left: 2px; }
.appsrow span { position: relative; width: 44px; height: 46px; display: flex; align-items: center; justify-content: center; }
.appsrow svg { width: 24px; height: 24px; }
.run::after { content: ""; position: absolute; left: 19px; bottom: 4px; width: 6px; height: 3px; border-radius: 2px; background: #9aa0ad; }
.appsrow em { position: absolute; top: 6px; line-height: 15px; text-align: center; font-size: 11px; letter-spacing: -.3px; }
.appsrow .blue { left: 22px; width: 20px; height: 15px; border-radius: 8px; background: #4cc2ff; color: #0b1a2c; }
.appsrow .red { left: 24px; width: 15px; height: 15px; border-radius: 8px; background: #f04747; }
.tray { width: 100px; height: 22px; margin-left: auto; }
.clock { width: 74px; margin-right: 19px; display: flex; flex-direction: column; align-items: flex-end; line-height: 16px; letter-spacing: -.15px; }
```
